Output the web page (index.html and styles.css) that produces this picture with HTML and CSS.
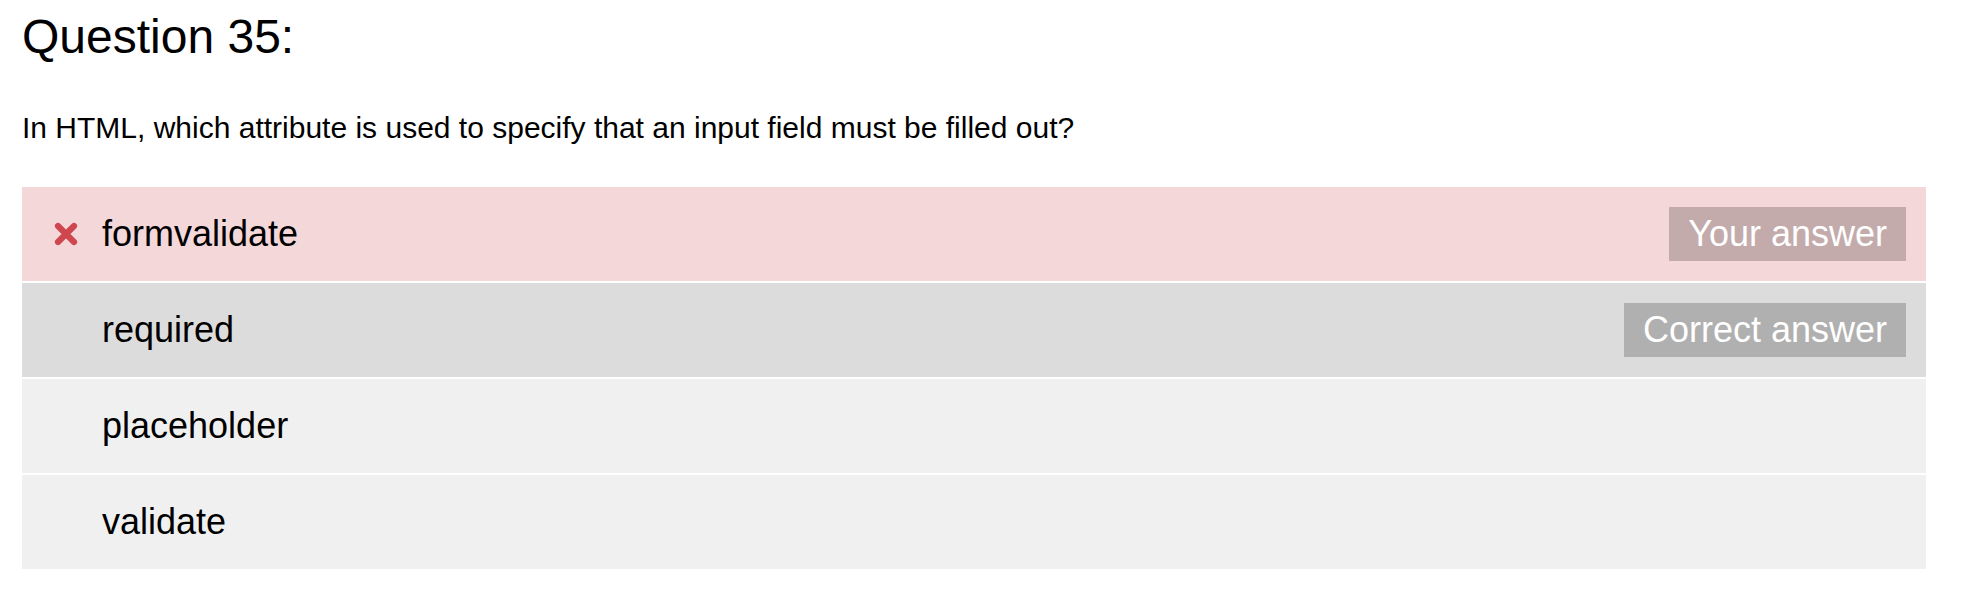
FILE: index.html
```html
<!DOCTYPE html>
<html>
<head>
<meta charset="utf-8">
<link rel="stylesheet" href="styles.css">
</head>
<body>
<div class="page">
  <h1 class="title">Question 35:</h1>
  <p class="question">In HTML, which attribute is used to specify that an input field must be filled out?</p>
  <ul class="options">
    <li class="option option-wrong">
      <span class="mark">
        <svg width="24" height="24" viewBox="0 0 24 24"><path d="M4 4 L20 20 M20 4 L4 20" stroke="#d0464f" stroke-width="6.2" stroke-linecap="round" fill="none"/></svg>
      </span>
      <span class="label">formvalidate</span>
      <span class="badge badge-yours">Your answer</span>
    </li>
    <li class="option option-correct">
      <span class="mark"></span>
      <span class="label">required</span>
      <span class="badge badge-correct">Correct answer</span>
    </li>
    <li class="option">
      <span class="mark"></span>
      <span class="label">placeholder</span>
    </li>
    <li class="option">
      <span class="mark"></span>
      <span class="label">validate</span>
    </li>
  </ul>
</div>
</body>
</html>
```
FILE: styles.css
```css
html, body {
  margin: 0;
  padding: 0;
  background: #ffffff;
}
body {
  font-family: "Liberation Sans", Arial, Helvetica, sans-serif;
  color: #000000;
}
.page {
  padding: 0 48px 0 22px;
}
.title {
  margin: 9px 0 0 0;
  font-size: 48px;
  font-weight: normal;
  line-height: normal;
}
.question {
  margin: 47px 0 0 0;
  font-size: 30px;
  line-height: normal;
}
.options {
  list-style: none;
  margin: 42px 0 0 0;
  padding: 0;
  display: flex;
  flex-direction: column;
  gap: 2px;
}
.option {
  display: flex;
  align-items: center;
  height: 94px;
  box-sizing: border-box;
  padding: 0 20px 0 32px;
  background: #f0f0f0;
  font-size: 36px;
}
.option-wrong {
  background: #f4d7d9;
}
.option-correct {
  background: #dcdcdc;
}
.mark {
  width: 24px;
  height: 24px;
  margin-right: 24px;
  display: flex;
  align-items: center;
  justify-content: center;
  flex: none;
}
.mark svg {
  display: block;
}
.label {
  flex: 1;
  line-height: normal;
}
.badge {
  color: #ffffff;
  font-size: 36px;
  line-height: 54px;
  padding: 0 19px;
}
.badge-yours {
  background: #c3abac;
}
.badge-correct {
  background: #b0b0b0;
}
```
